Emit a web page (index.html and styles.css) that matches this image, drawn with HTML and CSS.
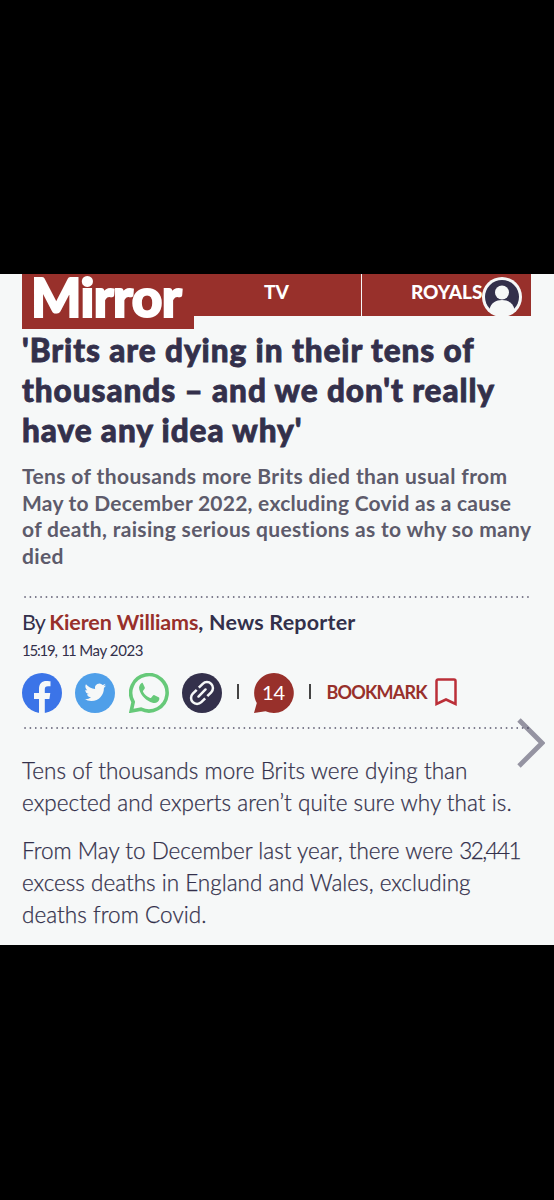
FILE: index.html
```html
<!DOCTYPE html>
<html lang="en">
<head>
<meta charset="utf-8">
<title>Mirror</title>
<link rel="stylesheet" href="styles.css">
</head>
<body>
<main class="page">
  <header class="topbar">
    <div class="logo"><span class="logo-text">Mirror</span></div>
    <nav class="nav">
      <a class="nav-item nav-tv">TV</a>
      <a class="nav-item nav-royals">ROYALS</a>
    </nav>
    <svg class="avatar" viewBox="0 0 40 40"><circle cx="20" cy="20" r="20" fill="#f6f8f8"/><circle cx="20" cy="20" r="17" fill="#33304b"/><circle cx="20" cy="15.500" r="7" fill="#f6f8f8"/><path d="M7.500 32C9 26 14 23 20 23s11 3 12.500 9C29 37 25 39.500 20 39.500S11 37 7.500 32Z" fill="#f6f8f8"/></svg>
  </header>
  <h1 class="headline">
    <span class="line h1">'Brits are dying in their tens of</span>
    <span class="line h2">thousands – and we don't really</span>
    <span class="line h3">have any idea why'</span>
  </h1>
  <p class="standfirst">
    <span class="line s1">Tens of thousands more Brits died than usual from</span>
    <span class="line s2">May to December 2022, excluding Covid as a cause</span>
    <span class="line s3">of death, raising serious questions as to why so many</span>
    <span class="line s4">died</span>
  </p>
  <svg class="dots" viewBox="0 0 510 2"><path d="M2.300 1H509"/></svg>
  <p class="byline"><span class="by">By </span><a class="author">Kieren Williams</a><b class="role">, News Reporter</b></p>
  <p class="date"><span class="time">15:19,</span> <span class="day">11</span> <span class="month">May 2023</span></p>
  <div class="share">
    <svg class="icon" viewBox="0 0 40 40"><circle cx="20" cy="20" r="20" fill="#3b74e8"/><path d="M17 40V26h-5v-6h5v-4c0-5.500 3-8 7.500-8 2 0 4 .3 4 .3v5H26c-2.500 0-3.200 1.200-3.200 3V20h5.500l-.9 6h-4.600v14Z" fill="#f6f8f8"/></svg>
    <svg class="icon" viewBox="0 0 40 40"><circle cx="20" cy="20" r="20" fill="#4f9fe9"/><path transform="translate(9.500 8.500) scale(.9)" fill="#f6f8f8" d="M23.950 4.570a10 10 0 0 1-2.820.78 4.950 4.950 0 0 0 2.160-2.730c-.95.560-2 .96-3.130 1.190a4.920 4.920 0 0 0-8.380 4.480C7.690 8.100 4.070 6.130 1.640 3.160a4.820 4.820 0 0 0-.67 2.480c0 1.710.87 3.210 2.190 4.100a4.900 4.900 0 0 1-2.230-.62v.06a4.920 4.920 0 0 0 3.950 4.830 5 5 0 0 1-2.210.08 4.940 4.940 0 0 0 4.600 3.420A9.870 9.870 0 0 1 0 19.540a14 14 0 0 0 7.550 2.210c9.050 0 14-7.500 14-13.980l-.02-.64a9.900 9.900 0 0 0 2.420-2.560Z"/></svg>
    <svg class="icon" viewBox="0 0 40 40"><path d="M2.200 38l2-9A18.200 18.200 0 1 1 12 36.200Z" fill="none" stroke="#66c979" stroke-width="3.600"/><path transform="translate(20 20) scale(1.080) translate(-20 -20)" d="M13.500 10.500c-2 1.500-3.200 3.600-2.500 6.300 1.500 5.700 6.600 10.700 12.300 12.300 3.200.8 5.400-.6 6.200-3 .2-1.200.1-1.800-.6-2.200l-3.800-1.900c-.7-.3-1.100-.2-1.600.5l-1.500 1.800c-.4.5-.8.5-1.400.2-2.500-1.200-4.500-3-6-5.500-.3-.6-.3-1 .1-1.400l1.200-1.500c.3-.5.400-.8.1-1.400L14.300 11c-.2-.4-.4-.5-.8-.5Z" fill="#66c979"/></svg>
    <svg class="icon" viewBox="0 0 40 40"><circle cx="20" cy="20" r="20" fill="#33304b"/><g transform="rotate(-45 20 20)" fill="none" stroke="#f6f8f8" stroke-width="2.500"><path d="M18.500 26H13a6 6 0 0 1 0-12h5.500"/><path d="M21.500 14H27a6 6 0 0 1 0 12h-5.500"/><path d="M15 20h10" stroke-linecap="round"/></g></svg>
    <span class="sep"></span>
    <span class="comments">
      <svg class="icon" viewBox="0 0 40 40"><path d="M20 0a20 20 0 1 1-8.500 38.200L0 40l2.800-10A20 20 0 0 1 20 0Z" fill="#98302b"/></svg>
      <span class="count">14</span>
    </span>
    <span class="sep sep2"></span>
    <span class="bookmark">BOOKMARK</span>
    <svg class="mark" viewBox="0 0 22 28"><path d="M1.500 26V3a1.500 1.500 0 0 1 1.500-1.500h16A1.500 1.500 0 0 1 20.500 3v23L11 21.500Z" fill="none" stroke="#bb2f38" stroke-width="2.500"/></svg>
  </div>
  <svg class="dots dots2" viewBox="0 0 510 2"><path d="M2.300 1H509"/></svg>
  <div class="story">
    <p class="para">
      <span class="line p1">Tens of thousands more Brits were dying than</span>
      <span class="line p2">expected and experts aren’t quite sure why that is.</span>
    </p>
    <p class="para">
      <span class="line p3">From May to December last year, there were <span class="figure">32,441</span></span>
      <span class="line p4">excess deaths in England and Wales, excluding</span>
      <span class="line p5">deaths from Covid.</span>
    </p>
  </div>
  <svg class="next" viewBox="0 0 28 50"><path d="M2 2L25 25 2 48" fill="none" stroke="#33304b" stroke-opacity=".5" stroke-width="4.800"/></svg>
</main>
</body>
</html>
```
FILE: styles.css
```css
* { box-sizing: border-box; }
body { margin: 0; height: 1200px; padding-top: 274px; background: #000; font-family: Lato, "Liberation Sans", sans-serif; color: #33304b; }
p, h1 { margin: 0; }
.page { position: relative; height: 671px; padding: 0 22px; background: #f6f8f8; }
.topbar { position: relative; display: flex; align-items: flex-start; width: 509px; height: 55px; color: #fff; }
.logo { width: 172px; height: 55px; padding-left: 9px; background: #98302b; }
.logo-text { display: block; font: 900 53px/45px Lato, sans-serif; letter-spacing: -.6px; -webkit-text-stroke: 2px #fff; }
.nav { display: flex; flex: 1; height: 42px; font-size: 19px; font-weight: 900; line-height: 36px; background: #98302b; }
.nav-item { display: block; }
.nav-tv { width: 168px; padding-left: 70px; border-right: 1px solid #f6f8f8; }
.nav-royals { padding-left: 49px; }
.avatar { position: absolute; left: 460px; top: 3px; width: 40px; height: 40px; }
.line { display: block; white-space: nowrap; }
.headline { padding-top: 1px; font-size: 31.500px; font-weight: 900; line-height: 40px; letter-spacing: .93px; -webkit-text-stroke: .8px #33304b; }
.standfirst { padding-top: 13px; font-size: 21px; font-weight: 700; line-height: 26.700px; letter-spacing: .33px; color: #5d5b6b; }
.s1 { letter-spacing: .38px; }
.s2 { letter-spacing: .25px; }
.dots { display: block; width: 510px; height: 2px; margin-top: 26px; }
.dots path { fill: none; stroke: #55536a; stroke-width: 1.500; stroke-dasharray: 1.500 3.850; }
.byline { margin-top: 10px; font-size: 21.500px; line-height: 28px; white-space: nowrap; }
.by { letter-spacing: -.8px; }
.author { font-weight: 700; letter-spacing: -.1px; color: #98302b; }
.role { font-weight: 700; letter-spacing: .2px; }
.date { margin-top: 4px; font-size: 15px; line-height: 20px; letter-spacing: -.3px; white-space: nowrap; }
.time { letter-spacing: -1.200px; }
.day { letter-spacing: -2px; padding: 0 1px; }
.month { letter-spacing: -.4px; }
.share { display: flex; align-items: center; height: 41px; margin: 13px 0 0 -.5px; }
.icon { display: block; width: 40px; height: 40px; flex: none; margin-right: 13.500px; }
.sep { width: 2px; height: 15px; margin: -3px 15px 0 1px; background: #444; }
.sep2 { margin: -3px 16px 0 0; }
.comments { position: relative; width: 55px; }
.count { position: absolute; left: 0; top: 0; width: 40px; line-height: 38px; text-align: center; font-size: 20px; color: #fff; }
.bookmark { width: 108px; margin-top: -2px; font-size: 18px; font-weight: 700; letter-spacing: -.8px; color: #98302b; }
.mark { width: 22px; height: 28px; margin-top: -2px; }
.dots2 { margin-top: 13px; }
.story { padding-top: 26px; font-size: 22.500px; font-weight: 300; line-height: 32px; letter-spacing: .05px; -webkit-text-stroke: .25px #33304b; }
.p3, .p4 { letter-spacing: 0; }
.figure { letter-spacing: -1.550px; }
.para { margin-bottom: 16px; }
.next { position: absolute; left: 517px; top: 444px; width: 28px; height: 50px; }
```
